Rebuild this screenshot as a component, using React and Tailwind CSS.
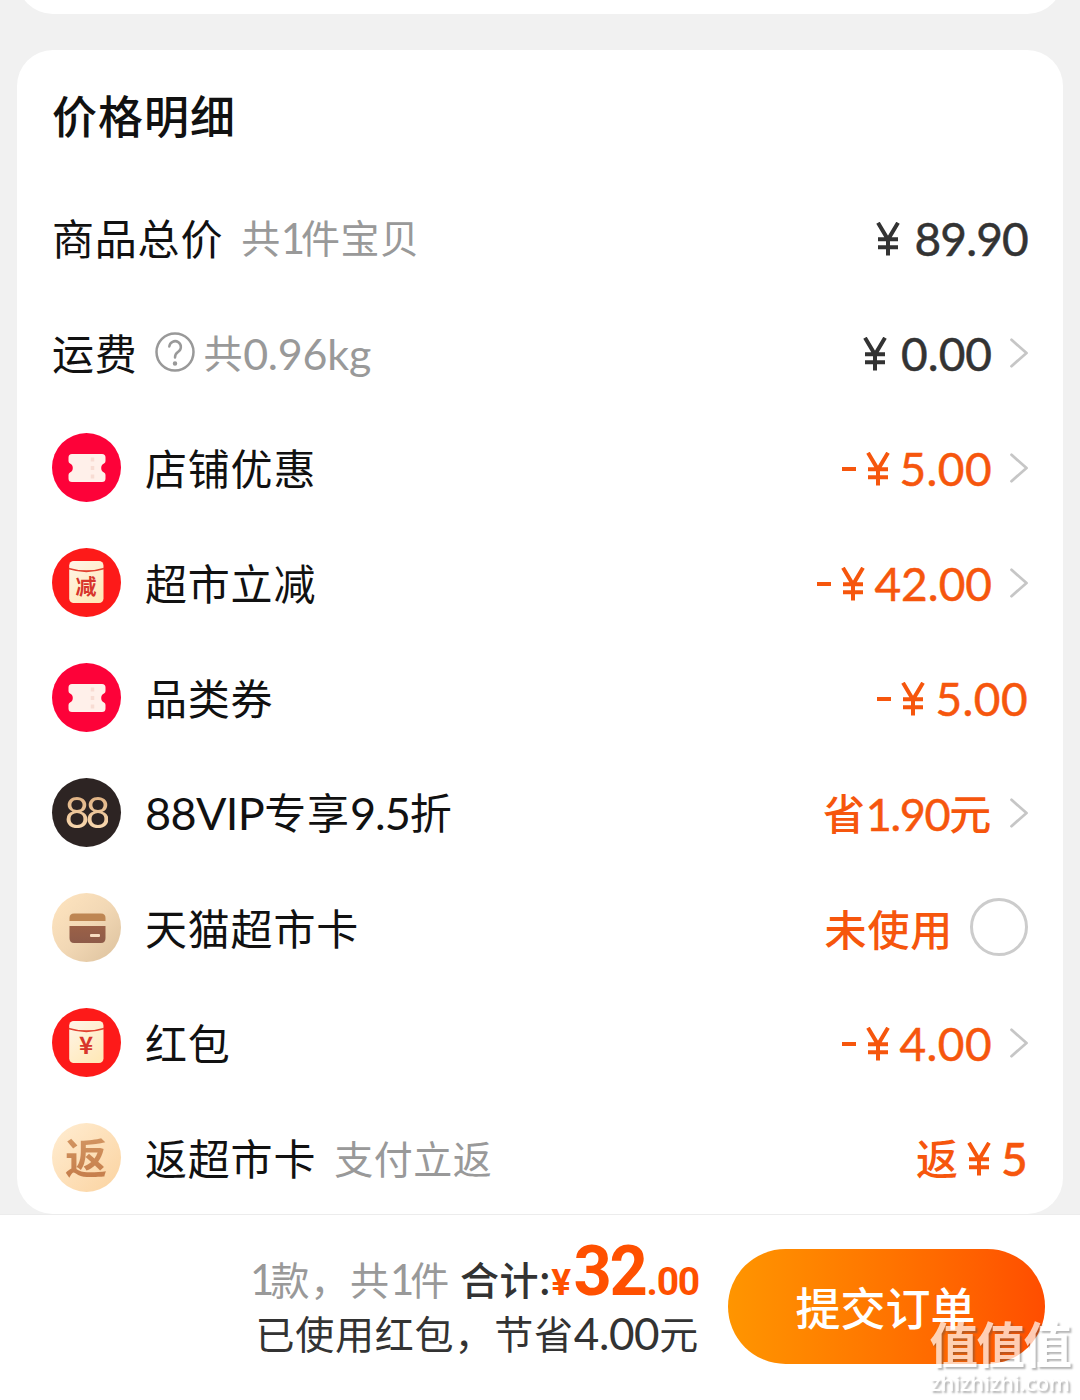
import React from "react";

const Chevron = () => (
  <svg className="ml-[16px] h-[30px] w-[20px] shrink-0" viewBox="0 0 20 30" fill="none" stroke="#c6c6c6" strokeWidth="2.8" strokeLinecap="round" strokeLinejoin="round">
    <path d="M3.500 1.800 L18.500 15 L3.500 28.200" />
  </svg>
);

const TicketIcon = () => (
  <svg className="h-[69px] w-[69px]" viewBox="0 0 69 69">
    <circle cx="34.5" cy="34.5" r="34.5" fill="#fd0239" />
    <path d="M20 21h30q3.500 0 3.500 3.500v3.500q0 1.800-1.500 2.500q-2.800 1.200-2.800 4.500t2.800 4.500q1.500.7 1.500 2.500v3.500q0 3.500-3.500 3.500H20q-3.500 0-3.500-3.500v-3.500q0-1.800 1.500-2.500q2.800-1.200 2.800-4.500t-2.800-4.500q-1.500-.7-1.500-2.500v-3.500q0-3.500 3.500-3.500z" fill="#fff0ea" />
    <path d="M40.500 24.500v4M40.500 33v4M40.500 41.500v4" stroke="#f8dcd3" strokeWidth="3.500" />
  </svg>
);

const PacketIcon = ({ mark }) => (
  <div className="relative h-[69px] w-[69px]">
    <svg className="h-[69px] w-[69px]" viewBox="0 0 69 69">
      <defs>
        <linearGradient id="packet" x1="0" y1="0" x2="0.7" y2="1">
          <stop offset="0" stopColor="#fff5e8" />
          <stop offset="1" stopColor="#ffe9ba" />
        </linearGradient>
      </defs>
      <circle cx="34.5" cy="34.5" r="34.5" fill="#fd1a19" />
      <rect x="17.2" y="13" width="34.3" height="42" rx="4.5" fill="url(#packet)" />
      <path d="M16.500 20.500q18 5.500 35.700 0" fill="none" stroke="#e2402f" strokeWidth="1.800" />
    </svg>
    <span className={"absolute inset-x-0 text-center font-bold text-[#d8352b] " + (mark === "减" ? "top-[26px] text-[21px] leading-[22px]" : "top-[24px] text-[24px] leading-[24px]")}>{mark}</span>
  </div>
);

const VipIcon = () => (
  <div className="flex h-[69px] w-[69px] items-center justify-center rounded-full bg-[#2d2423]">
    <span className="-mt-[2px] bg-gradient-to-b from-[#d9a878] to-[#ffe3bb] bg-clip-text pr-[2px] text-[43px] leading-[50px] tracking-[-4px] text-transparent [font-family:Lato,sans-serif]">88</span>
  </div>
);

const CardIcon = () => (
  <svg className="h-[69px] w-[69px]" viewBox="0 0 69 69">
    <defs>
      <linearGradient id="disc" x1="0" y1="0" x2="1" y2="1">
        <stop offset="0" stopColor="#ffe5c0" />
        <stop offset="0.5" stopColor="#f2d8b5" />
        <stop offset="1" stopColor="#dcc19d" />
      </linearGradient>
      <linearGradient id="cardBody" x1="0" y1="0" x2="0" y2="1">
        <stop offset="0" stopColor="#9b6147" />
        <stop offset="1" stopColor="#8e5b49" />
      </linearGradient>
    </defs>
    <circle cx="34.5" cy="34.5" r="34.5" fill="url(#disc)" />
    <path d="M17.500 28v-3q0-4.500 4.500-4.500h27q4.500 0 4.500 4.500v3z" fill="#be8653" />
    <path d="M17.500 33h36v12q0 5-4.500 5h-27q-4.500 0-4.500-5z" fill="url(#cardBody)" />
    <rect x="38" y="41" width="10" height="3" rx="1" fill="#f7dcc0" />
  </svg>
);

const ReturnIcon = () => (
  <div className="flex h-[69px] w-[69px] items-center justify-center rounded-full bg-gradient-to-br from-[#ffedd2] to-[#fbd3a0]">
    <span className="-mt-[3px] bg-gradient-to-b from-[#d59a66] to-[#c37a48] bg-clip-text text-[42px] font-bold leading-[56px] text-transparent">返</span>
  </div>
);

const L = ({ children, className = "tracking-[-1px]" }) => (
  <span className={"relative top-px text-[45px] [font-family:Lato,sans-serif] " + className}>{children}</span>
);

const Amount = ({ minus, yenGap, value, tone, track = "tracking-[0.4px]" }) => (
  <span className={"flex items-center leading-[60px] [font-family:Lato,sans-serif] " + tone}>
    {minus && <span className="mr-[10px] mt-[2px] h-[4px] w-[14px] bg-current" />}
    <svg className="h-[34px] w-[24px] translate-y-[1px]" viewBox="0 0 24 34" fill="none" stroke="currentColor" strokeWidth="4">
      <path d="M2 .8 L12 17.500 L22 .8 M12 17V33.500 M2 17.200H22 M2 25.300H22" />
    </svg>
    <span className={"translate-y-px text-[46px] [-webkit-text-stroke:0.500px_currentColor] " + track + " " + yenGap}>{value}</span>
  </span>
);

const orange = "text-[#f6560d]";

const rows = [
  { label: "商品总价", note: <>共<span className="relative top-px text-[42px] tracking-[-4px] [font-family:Lato,sans-serif]">1</span>件宝贝</>, right: <Amount yenGap="ml-[14px]" value="89.90" track="tracking-[-0.800px]" tone="text-[#333]" /> },
  { label: "运费", help: true, note: <>共<span className="relative top-[2px] text-[43px] tracking-[-0.200px] [font-family:Lato,sans-serif]">0.96kg</span></>, right: <Amount yenGap="ml-[14px]" value="0.00" track="tracking-[0px]" tone="text-[#333]" />, more: true },
  { icon: <TicketIcon />, label: "店铺优惠", right: <Amount minus yenGap="ml-[10px]" value="5.00" tone={orange} />, more: true },
  { icon: <PacketIcon mark="减" />, label: "超市立减", right: <Amount minus yenGap="ml-[9px]" value="42.00" track="tracking-[0px]" tone={orange} />, more: true },
  { icon: <TicketIcon />, label: "品类券", right: <Amount minus yenGap="ml-[11px]" value="5.00" tone={orange} /> },
  { icon: <VipIcon />, label: <><L className="tracking-[-0.600px]">88VIP</L>专享<L className="tracking-[-1px]">9.5</L>折</>, right: <span className="font-medium text-[#f6560d]">省<L className="font-normal tracking-[-1.400px] [-webkit-text-stroke:0.500px_currentColor]">1.90</L>元</span>, more: true },
  { icon: <CardIcon />, label: "天猫超市卡", right: <span className="font-medium text-[#f6560d]">未使用</span>, radio: true },
  { icon: <PacketIcon mark="¥" />, label: "红包", right: <Amount minus yenGap="ml-[10px]" value="4.00" tone={orange} />, more: true },
  { icon: <ReturnIcon />, label: "返超市卡", note: "支付立返", right: <span className="flex items-center font-medium text-[#f6560d]"><span className="mr-[8px] -translate-y-px">返</span><Amount yenGap="ml-[10px]" value="5" tone={orange} /></span> },
];

const Row = ({ icon, label, note, help, right, more, radio }) => (
  <div className="flex h-[115px] items-center text-[42px] leading-[60px] tracking-[0.800px] text-[#111]">
    {icon && <div className="mr-[24px] shrink-0">{icon}</div>}
    <span className="-translate-y-px">{label}</span>
    {help && (
      <svg className="ml-[17px] h-[40px] w-[40px] -translate-y-px" viewBox="0 0 40 40" fill="none" stroke="#999" strokeWidth="2.500" strokeLinecap="round">
        <circle cx="20" cy="20" r="18.500" />
        <path d="M14.300 14.500a5.800 5.800 0 1 1 8.500 5.600c-2 1.300-2.800 2.300-2.800 5.500" />
        <circle cx="20" cy="31.500" r="1" fill="#999" />
      </svg>
    )}
    {note && <span className={"-translate-y-px text-[39px] tracking-[0.500px] text-[#999] " + (help ? "ml-[9px]" : "ml-[18px]")}>{note}</span>}
    <div className="ml-auto flex items-center">
      {right}
      {more && <Chevron />}
      {radio && <span className="ml-[17px] h-[58px] w-[58px] -translate-y-px rounded-full border-[3px] border-[#ccc]" />}
    </div>
  </div>
);

export default function App() {
  return (
    <div className="relative flex h-[1400px] w-[1080px] flex-col overflow-hidden bg-[#f1f1f1] [font-family:'Noto_Sans_CJK_SC',sans-serif]">
      <div className="mx-[17px] h-[14px] shrink-0 overflow-hidden">
        <div className="-mt-[60px] h-[74px] rounded-b-[36px] bg-white" />
      </div>
      <main className="mx-[17px] mt-[36px] h-[1164px] shrink-0 overflow-hidden rounded-[36px] bg-white px-[35px]">
        <h1 className="h-[130px] pt-[35px] text-[45px] font-medium leading-[60px] tracking-[1px] text-[#111]">价格明细</h1>
        {rows.map((r, i) => <Row key={i} {...r} />)}
      </main>
      <footer className="flex grow items-start border-t border-[#ececec] bg-white">
        <div className="flex w-[699px] flex-col items-end pt-[23px] text-[#333]">
          <div className="flex h-[66px] items-baseline whitespace-nowrap text-[39px] leading-[66px]">
            <span className="tracking-[0.800px] text-[#999]"><span className="text-[42px] tracking-[-4px] [font-family:Lato,sans-serif]">1</span>款，共<span className="text-[42px] tracking-[-4px] [font-family:Lato,sans-serif]">1</span>件</span>
            <span className="ml-[10px] font-medium tracking-[0.500px]">合计:</span>
            <span className="flex items-baseline font-bold text-[#ff5000] [font-family:Roboto,sans-serif]">
              <span className="text-[37px]">¥</span>
              <span className="-ml-[2px] inline-block origin-right scale-x-[.94] text-[71px] tracking-[-2.500px]">32</span>
              <span className="ml-[1px] text-[39px] tracking-[-1.200px]">.00</span>
            </span>
          </div>
          <div className="mt-[3px] text-[39px] leading-[50px] tracking-[0.800px]">已使用红包，节省<span className="relative top-px text-[44px] tracking-[-0.400px] [font-family:Lato,sans-serif]">4.00</span>元</div>
        </div>
        <button className="ml-[29px] mt-[34px] h-[115px] w-[317px] rounded-full bg-gradient-to-r from-[#ff9500] to-[#ff4d00] pr-[2px] text-[45px] font-medium leading-[60px] text-white">提交订单</button>
      </footer>
      <div className="absolute right-[7px] top-[1312px] flex w-[146px] flex-col items-center text-white opacity-70 [text-shadow:2px_2px_2px_rgba(80,80,80,0.6)]">
        <span className="text-[48.500px] font-bold leading-[60px] tracking-[-1.500px]">值值值</span>
        <span className="text-[22px] font-semibold leading-[20px] tracking-[-0.300px] [font-family:'Open_Sans',sans-serif]">zhizhizhi.com</span>
      </div>
    </div>
  );
}
